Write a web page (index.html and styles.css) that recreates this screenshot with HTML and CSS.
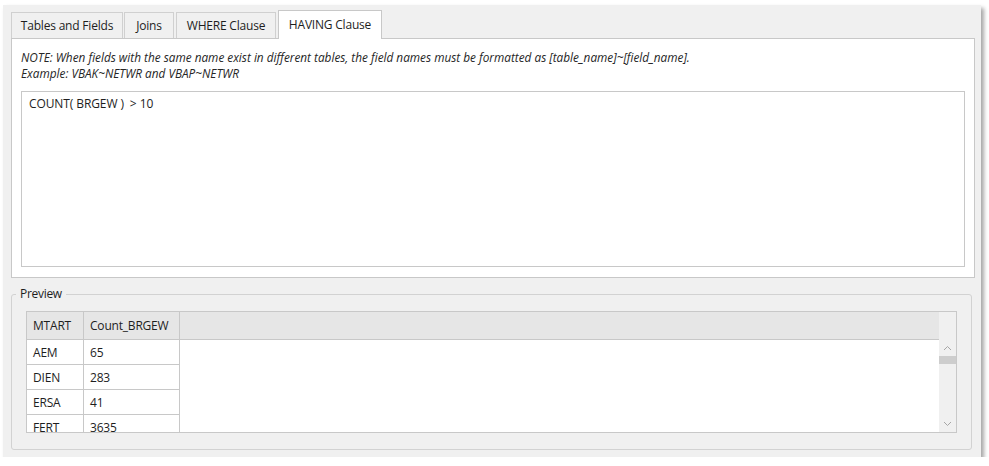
FILE: index.html
```html
<!DOCTYPE html>
<html>
<head>
<meta charset="utf-8">
<link rel="stylesheet" href="styles.css">
</head>
<body>
<div class="window">
  <div class="tabs">
    <div class="tab t1">Tables and Fields</div>
    <div class="tab t2">Joins</div>
    <div class="tab t3">WHERE Clause</div>
    <div class="tab t4 active">HAVING Clause</div>
  </div>
  <div class="panel">
    <div class="note">NOTE: When fields with the same name exist in different tables, the field names must be formatted as [table_name]~[field_name].<br>Example: VBAK~NETWR and VBAP~NETWR</div>
    <div class="editor">COUNT( BRGEW )&nbsp; &gt; 10</div>
  </div>
  <div class="group">
    <span class="legend">Preview</span>
    <div class="grid">
      <div class="grid-main">
        <div class="hrow">
          <div class="cell c1">MTART</div>
          <div class="cell c2">Count_BRGEW</div>
          <div class="hfill"></div>
        </div>
        <div class="row"><div class="cell c1">AEM</div><div class="cell c2">65</div></div>
        <div class="row"><div class="cell c1">DIEN</div><div class="cell c2">283</div></div>
        <div class="row"><div class="cell c1">ERSA</div><div class="cell c2">41</div></div>
        <div class="row"><div class="cell c1">FERT</div><div class="cell c2">3635</div></div>
      </div>
      <div class="vscroll">
        <div class="sb-top"></div>
        <svg class="arrow" width="17" height="16" viewBox="0 0 17 16"><path d="M5 10 L8.5 6.5 L12 10" fill="none" stroke="#a6a6a6" stroke-width="1"/></svg>
        <div class="thumb"></div>
        <div class="track"></div>
        <svg class="arrow" width="17" height="16" viewBox="0 0 17 16"><path d="M5 6 L8.5 9.5 L12 6" fill="none" stroke="#a6a6a6" stroke-width="1"/></svg>
      </div>
    </div>
  </div>
</div>
</body>
</html>
```
FILE: styles.css
```css
html, body {
  margin: 0;
  padding: 0;
  background: #ffffff;
}
body {
  font-family: "Open Sans", "Noto Sans", sans-serif;
  font-size: 12px;
  color: #1e1e1e;
}
.window {
  margin: 5px 0 0 3px;
  width: 978px;
  height: 452px;
  background: #f0f0f0;
  box-shadow: 3px 3px 4px rgba(0, 0, 0, 0.35);
  box-sizing: border-box;
  padding-top: 5px;
  display: flex;
  flex-direction: column;
}
.tabs {
  display: flex;
  align-items: flex-end;
  padding-left: 8px;
  height: 28px;
  position: relative;
  z-index: 2;
}
.tab {
  height: 26px;
  box-sizing: border-box;
  border: 1px solid #d0d0d0;
  border-bottom: none;
  background: #f0f0f0;
  display: flex;
  align-items: center;
  justify-content: center;
  font-size: 12px;
  letter-spacing: -0.2px;
  margin-right: 2px;
  color: #1e1e1e;
}
.t1 { width: 112px; margin-right: 1px; }
.t2 { width: 50px; margin-right: 2px; }
.t3 { width: 100px; margin-right: 2px; }
.t4 { width: 104px; }
.tab.active {
  height: 29px;
  margin-bottom: -1px;
  background: #ffffff;
  border-color: #c8c8c8;
  padding-bottom: 2px;
}
.panel {
  margin-left: 8px;
  width: 964px;
  height: 240px;
  box-sizing: border-box;
  border: 1px solid #c8c8c8;
  background: #ffffff;
  padding: 10px 9px 10px 9px;
  position: relative;
  z-index: 1;
}
.note {
  font-style: italic;
  font-size: 11.8px;
  line-height: 16px;
  color: #262626;
}
.editor {
  margin-top: 10px;
  height: 176px;
  box-sizing: border-box;
  border: 1px solid #c8c8c8;
  padding: 4px 7px;
  font-size: 12px;
  letter-spacing: -0.1px;
  line-height: 16px;
}
.group {
  position: relative;
  margin: 16px 0 0 8px;
  width: 961px;
  height: 156px;
  box-sizing: border-box;
  border: 1px solid #d2d2d2;
  border-radius: 3px;
  padding: 16px 14px 0 14px;
}
.legend {
  position: absolute;
  left: 4px;
  top: -9px;
  padding: 0 4px;
  background: #f0f0f0;
  font-size: 12px;
  line-height: 16px;
  letter-spacing: -0.3px;
  color: #1e1e1e;
}
.grid {
  width: 931px;
  height: 122px;
  box-sizing: border-box;
  border: 1px solid #c8c8c8;
  background: #ffffff;
  display: flex;
  overflow: hidden;
}
.grid-main {
  flex: 1;
  display: flex;
  flex-direction: column;
  overflow: hidden;
}
.hrow {
  display: flex;
  height: 28px;
  flex: none;
  background: #e6e6e6;
  border-bottom: 1px solid #c8c8c8;
  box-sizing: border-box;
}
.hfill { flex: 1; }
.row {
  display: flex;
  height: 25px;
  flex: none;
  box-sizing: border-box;
}
.cell {
  box-sizing: border-box;
  border-right: 1px solid #c8c8c8;
  border-bottom: 1px solid #c8c8c8;
  display: flex;
  align-items: center;
  padding-left: 6px;
  font-size: 12px;
  letter-spacing: -0.2px;
}
.hrow .cell { border-bottom: none; }
.c1 { width: 57px; }
.c2 { width: 96px; }
.vscroll {
  width: 17px;
  flex: none;
  background: #f0f0f0;
  display: flex;
  flex-direction: column;
}
.sb-top {
  height: 28px;
  flex: none;
}
.arrow {
  display: block;
  flex: none;
}
.thumb {
  height: 8px;
  flex: none;
  background: #cdcdcd;
}
.track { flex: 1; }
```
